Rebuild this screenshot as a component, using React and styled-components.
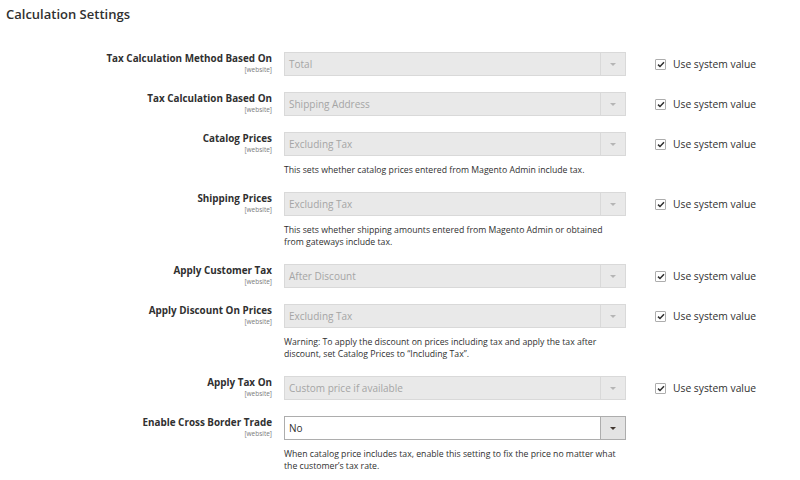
import React from 'react'
import styled, { createGlobalStyle } from 'styled-components'

const GlobalStyle = createGlobalStyle`
  body {
    margin: 0;
    background: #ffffff;
    font-family: "Open Sans", "Liberation Sans", sans-serif;
    color: #303030;
  }
`

const Page = styled.div`
  width: 800px;
  height: 480px;
  padding: 6px 6px 0 6px;
  box-sizing: border-box;
  overflow: hidden;
`

const Title = styled.h2`
  margin: 0;
  font-size: 13px;
  font-weight: 600;
  line-height: 16px;
  color: #303030;
`

const Fieldset = styled.div`
  display: flex;
  flex-direction: column;
  gap: 16px;
  margin-top: 30px;
`

const Row = styled.div`
  display: grid;
  grid-template-columns: 266px 342px 1fr;
  column-gap: 12px;
  align-items: start;
`

const LabelCell = styled.div`
  text-align: right;
`

const LabelText = styled.div`
  font-size: 9.9px;
  font-weight: 700;
  line-height: 12px;
  color: #303030;
`

const Scope = styled.div`
  font-size: 6.5px;
  line-height: 9px;
  margin-top: 1px;
  color: #7a7a7a;
`

const Control = styled.div`
  display: flex;
  flex-direction: column;
`

const Select = styled.div`
  display: flex;
  height: 24px;
  box-sizing: border-box;
  border: 1px solid ${p => (p.disabled ? '#d9d9d9' : '#adadad')};
  background: ${p => (p.disabled ? '#e9e9e9' : '#ffffff')};
  color: ${p => (p.disabled ? '#a5a5a5' : '#303030')};
`

const Value = styled.div`
  flex: 1;
  padding-left: 4px;
  font-size: 10px;
  line-height: 22px;
`

const Arrow = styled.div`
  width: 24px;
  display: flex;
  align-items: center;
  justify-content: center;
  border-left: 1px solid ${p => (p.disabled ? '#d9d9d9' : '#adadad')};
  background: ${p => (p.disabled ? '#e9e9e9' : '#e3e3e3')};

  &::after {
    content: '';
    border-left: 3px solid transparent;
    border-right: 3px solid transparent;
    border-top: 3px solid ${p => (p.disabled ? '#b5b5b5' : '#41362f')};
  }
`

const Note = styled.div`
  margin-top: 8px;
  font-size: 8.7px;
  line-height: 12px;
  color: #303030;
  padding-right: 2px;
`

const SystemValue = styled.label`
  display: flex;
  align-items: center;
  height: 24px;
  margin-left: 17px;
  font-size: 10.3px;
  color: #303030;
`

const Checkbox = styled.span`
  width: 11px;
  height: 11px;
  box-sizing: border-box;
  border: 1px solid #adadad;
  border-radius: 1px;
  background: #fff;
  display: flex;
  align-items: center;
  justify-content: center;
  margin-right: 7px;
`

const Check = () => (
  <svg width="8" height="7" viewBox="0 0 8 7">
    <path d="M1 3.6 L3 5.5 L7 1.2" fill="none" stroke="#303030" strokeWidth="1.5" />
  </svg>
)

const rows = [
  { label: 'Tax Calculation Method Based On', value: 'Total', system: true },
  { label: 'Tax Calculation Based On', value: 'Shipping Address', system: true },
  {
    label: 'Catalog Prices',
    value: 'Excluding Tax',
    system: true,
    note: 'This sets whether catalog prices entered from Magento Admin include tax.',
  },
  {
    label: 'Shipping Prices',
    value: 'Excluding Tax',
    system: true,
    note: 'This sets whether shipping amounts entered from Magento Admin or obtained from gateways include tax.',
  },
  { label: 'Apply Customer Tax', value: 'After Discount', system: true },
  {
    label: 'Apply Discount On Prices',
    value: 'Excluding Tax',
    system: true,
    note: 'Warning: To apply the discount on prices including tax and apply the tax after discount, set Catalog Prices to “Including Tax”.',
  },
  { label: 'Apply Tax On', value: 'Custom price if available', system: true },
  {
    label: 'Enable Cross Border Trade',
    value: 'No',
    system: false,
    note: 'When catalog price includes tax, enable this setting to fix the price no matter what the customer’s tax rate.',
  },
]

const App = () => {
  return (
    <Page>
      <GlobalStyle />
      <Title>Calculation Settings</Title>
      <Fieldset>
        {rows.map(r => (
          <Row key={r.label}>
            <LabelCell>
              <LabelText>{r.label}</LabelText>
              <Scope>[website]</Scope>
            </LabelCell>
            <Control>
              <Select disabled={r.system}>
                <Value>{r.value}</Value>
                <Arrow disabled={r.system} />
              </Select>
              {r.note && <Note>{r.note}</Note>}
            </Control>
            {r.system ? (
              <SystemValue>
                <Checkbox>
                  <Check />
                </Checkbox>
                Use system value
              </SystemValue>
            ) : (
              <div />
            )}
          </Row>
        ))}
      </Fieldset>
    </Page>
  )
}

export default App
